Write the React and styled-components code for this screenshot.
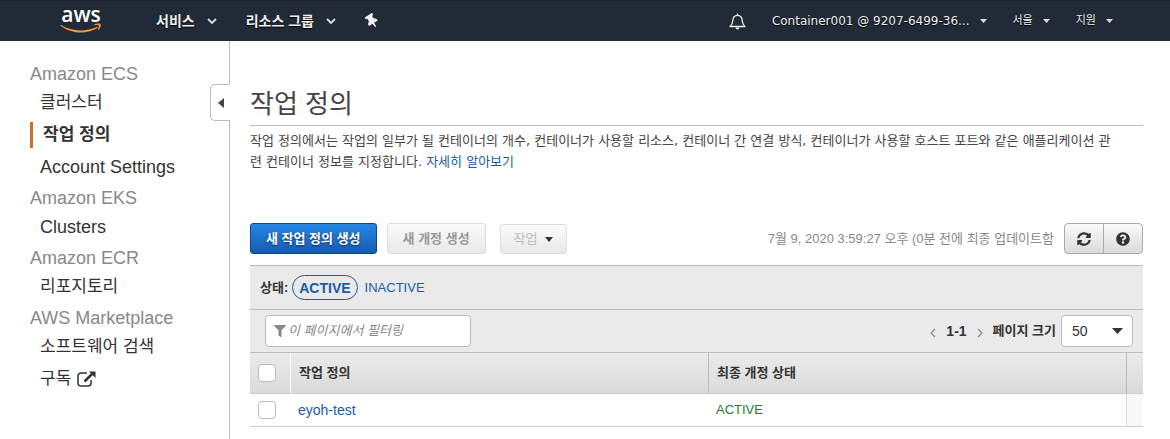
import React from "react";
import styled, { createGlobalStyle, css } from "styled-components";
import { FaFilter, FaQuestionCircle, FaSyncAlt, FaThumbtack } from "react-icons/fa";

const sans = `"Liberation Sans", "Noto Sans CJK KR", sans-serif`;
const verdana = `"DejaVu Sans", "Noto Sans CJK KR", sans-serif`;

const Global = createGlobalStyle`
  *, *::before, *::after { box-sizing: border-box; }
  body { margin: 0; background: #fff; color: #444; font: 13px/20px ${sans}; }
  button, input, select { font: inherit; color: inherit; margin: 0; }
  a { text-decoration: none; color: #1a5ba8; }
  h1, p, ul { margin: 0; padding: 0; }
  ul { list-style: none; }
`;

const Page = styled.div`
  min-height: 100vh;
  display: flex;
  flex-direction: column;
`;

const TopBar = styled.header`
  height: 41px;
  flex: none;
  display: flex;
  align-items: center;
  padding: 0 57px 0 60px;
  background: #212a37;
  border-top: 1px solid #1a222c;
`;

const Logo = styled.a`
  width: 42px;
  height: 28px;
  display: flex;
  flex-direction: column;
  align-items: center;
  gap: 2px;
  color: #fff;
  font: 600 21px/14px "Open Sans", sans-serif;
  svg { flex: none; }
`;

const NavButton = styled.button`
  display: flex;
  align-items: center;
  gap: ${(p) => (p.$small ? 10 : 12)}px;
  padding: 0;
  border: 0;
  background: none;
  color: #f0f0f0;
  font: ${(p) => (p.$small ? `12px/20px ${verdana}` : `bold 14px/20px ${sans}`)};
  text-shadow: 0 1px 1px #000;
`;

const PinIcon = styled(FaThumbtack)`
  transform: rotate(-32deg);
`;

const Menus = styled.nav`
  display: flex;
  align-items: center;
  gap: 29px;
  margin-left: 54px;
`;

const Account = styled.nav`
  display: flex;
  align-items: center;
  gap: 26px;
  margin-left: auto;
`;

const Region = styled(NavButton)`
  font-size: 11px;
`;

const Body = styled.div`
  flex: 1;
  display: flex;
`;

const Sidebar = styled.aside`
  position: relative;
  width: 230px;
  flex: none;
  padding: 20px 0 20px 30px;
  border-right: 1px solid #bbb;
`;

const Group = styled.section`
  & + & { margin-top: 2px; }
`;

const GroupTitle = styled.h2`
  margin: 0;
  font-size: 18px;
  font-weight: 400;
  line-height: 26px;
  color: #888;
`;

const SideLink = styled.a`
  display: flex;
  align-items: center;
  gap: 6px;
  height: 32px;
  padding-left: 10px;
  font-size: ${(p) => (p.$latin ? 18 : 17)}px;
  color: #333;
  ${(p) => p.$current && css`
    height: 26px;
    margin: 3px 0;
    border-left: 3px solid #c9702e;
    font-weight: bold;
  `}
`;

const Collapse = styled.button`
  position: absolute;
  top: 43px;
  right: -1px;
  width: 20px;
  height: 37px;
  display: flex;
  align-items: center;
  justify-content: center;
  padding: 0;
  background: #fff;
  border: 1px solid #bbb;
  border-right: 0;
  border-radius: 5px 0 0 5px;
`;

const Main = styled.main`
  flex: 1;
  min-width: 0;
  padding: 41px 27px 12px 20px;
`;

const Title = styled.h1`
  height: 44px;
  border-bottom: 1px solid #bbb;
  font-size: 26px;
  font-weight: 400;
  line-height: 44px;
`;

const Description = styled.p`
  padding: 4px 24px 0 0;
  font: 13px/21px ${verdana};
`;

const Toolbar = styled.div`
  display: flex;
  align-items: flex-end;
  gap: 10px;
  margin: 51px 0 11px;
`;

const Button = styled.button`
  height: 31px;
  padding: 0 15px;
  border: 1px solid ${(p) => (p.$primary ? "#0d4590" : "#ddd")};
  border-radius: 3px;
  font-weight: bold;
  color: ${(p) => (p.$primary ? "#fff" : "#999")};
  background: ${(p) => (p.$primary ? "linear-gradient(#2786e4, #165bb0)" : "linear-gradient(#fafafa, #e8e8e8)")};
  text-shadow: ${(p) => (p.$primary ? "0 1px 2px #0a3060" : "none")};
`;

const MenuButton = styled(Button)`
  height: 30px;
  margin-left: 4px;
  padding: 0 13px;
  display: flex;
  align-items: center;
  gap: 7px;
  font-weight: 400;
  color: #bbb;
`;

const Updated = styled.span`
  flex: 1;
  text-align: right;
  line-height: 31px;
  color: #888;
`;

const IconGroup = styled.div`
  display: flex;
`;

const IconButton = styled.button`
  width: 40px;
  height: 31px;
  display: grid;
  place-items: center;
  padding: 0;
  border: 1px solid #aaa;
  background: linear-gradient(#fafafa, #dadada);
  color: #333;
  font-size: 14px;
  &:first-child { border-radius: 4px 0 0 4px; }
  &:last-child { border-radius: 0 4px 4px 0; margin-left: -1px; }
`;

const PanelRow = styled.div`
  display: flex;
  align-items: center;
  height: ${(p) => p.$height}px;
  padding: 0 10px;
  border-top: 1px solid #bbb;
  background: #eaeaea;
  color: #333;
`;

const StatusButton = styled.button`
  height: 25px;
  padding: 0 6px;
  border: 1px solid ${(p) => (p.$active ? "#1a5ba8" : "transparent")};
  border-radius: 13px;
  margin-left: ${(p) => (p.$active ? 4 : 0)}px;
  background: none;
  color: #1a5ba8;
  font-weight: ${(p) => (p.$active ? "bold" : "normal")};
  font-size: ${(p) => (p.$active ? 14 : 13)}px;
`;

const Filter = styled.label`
  display: flex;
  align-items: center;
  gap: 2px;
  width: 206px;
  height: 32px;
  margin-left: 5px;
  padding: 0 8px;
  border: 1px solid #bbb;
  border-radius: 4px;
  background: #fff;
  color: #888;
  svg { flex: none; }
`;

const FilterInput = styled.input`
  flex: 1;
  min-width: 0;
  padding: 0;
  border: 0;
  outline: 0;
  background: none;
  &::placeholder { color: #888; opacity: 1; font-style: italic; }
`;

const Pager = styled.div`
  display: flex;
  align-items: center;
  gap: 10px;
  margin-left: auto;
  font-weight: bold;
`;

const Range = styled.span`
  font-size: 14px;
`;

const PagerButton = styled.button`
  display: flex;
  padding: 4px 0 0;
  border: 0;
  background: none;
`;

const SizeLabel = styled.label`
  display: flex;
  align-items: center;
  gap: 5px;
`;

const SelectBox = styled.span`
  display: grid;
  align-items: center;
  > * { grid-area: 1 / 1; }
  > svg { justify-self: end; margin-right: 10px; pointer-events: none; }
`;

const Select = styled.select`
  appearance: none;
  width: 72px;
  height: 32px;
  padding: 0 10px;
  border: 1px solid #bbb;
  border-radius: 4px;
  background: #fff;
  font-size: 14px;
  font-weight: 400;
`;

const Table = styled.table`
  width: 100%;
  table-layout: fixed;
  border-collapse: separate;
  border-spacing: 0;
  border-top: 1px solid #bbb;
`;

const HeadRow = styled.tr`
  height: 41px;
  background: linear-gradient(#ebebeb, #d9d9d9);
`;

const Head = styled.th`
  width: ${(p) => p.$width};
  padding: 0 8px;
  text-align: left;
  color: #333;
  border-bottom: 1px solid #ccc;
  border-left: ${(p) => p.$line ? `1px solid ${p.$line}` : 0};
`;

const Cell = styled.td`
  height: 33px;
  padding: 0 8px;
  color: #1b7e35;
  border-bottom: 1px solid #ccc;
  border-left: ${(p) => (p.$gutter ? "1px solid #ddd" : 0)};
  background: ${(p) => (p.$gutter ? "#f8f8f8" : "#fff")};
`;

const RowLink = styled.a`
  font-size: 14px;
`;

const Checkbox = styled.input.attrs({ type: "checkbox" })`
  appearance: none;
  display: block;
  width: 18px;
  height: 18px;
  border: 1px solid #bbb;
  border-radius: 4px;
  background: #fff;
  &:checked { background: #1a5ba8; }
`;

const Chevron = () => (
  <svg width="10" height="6" viewBox="0 0 10 6" fill="none" stroke="#ddd" strokeWidth="1.8" aria-hidden="true">
    <path d="M1 1l4 4 4-4" />
  </svg>
);

const Caret = ({ width = 8, height = 5, color = "#333" }) => (
  <svg width={width} height={height} viewBox="0 0 8 5" preserveAspectRatio="none" fill={color} aria-hidden="true">
    <path d="M0 0h8L4 5z" />
  </svg>
);

const Angle = ({ next }) => (
  <svg width="6" height="10" viewBox="0 0 6 10" fill="none" stroke="#888" strokeWidth="1.2" aria-hidden="true">
    <path d={next ? "M1 1l4 4-4 4" : "M5 1L1 5l4 4"} />
  </svg>
);

const groups = [
  { title: "Amazon ECS", items: [{ text: "클러스터" }, { text: "작업 정의", current: true }, { text: "Account Settings", latin: true }] },
  { title: "Amazon EKS", items: [{ text: "Clusters", latin: true }] },
  { title: "Amazon ECR", items: [{ text: "리포지토리" }] },
  { title: "AWS Marketplace", items: [{ text: "소프트웨어 검색" }, { text: "구독", external: true }] },
];

export default function App() {
  return (
    <Page>
      <Global />
      <TopBar>
        <Logo href="#">
          aws
          <svg width="42" height="10" viewBox="0 0 42 11" preserveAspectRatio="none" aria-hidden="true">
            <path d="M1 2.2c11 7.500 25 7.500 35.500 2.200 1-.4 1.700.5.800 1.200C27 13 11 12 .5 3c-.5-.5 0-1.100.5-.8z" fill="#f19634" />
            <path d="M34 1.800c2-1.300 5.500-1.600 6.500-.8.900 1-.2 5-2.200 6.800-.4.300-.8.100-.6-.3.600-1.500 1.500-4.200 1-4.800-.5-.6-3-.4-4.400-.2-.500 0-.7-.4-.3-.7z" fill="#f19634" />
          </svg>
        </Logo>
        <Menus>
          <NavButton>서비스 <Chevron /></NavButton>
          <NavButton>리소스 그룹 <Chevron /></NavButton>
          <NavButton aria-label="고정"><PinIcon size={14} /></NavButton>
        </Menus>
        <Account>
          <NavButton $small aria-label="알림">
            <svg width="17" height="17" viewBox="0 0 17 17" fill="none" stroke="#eee" strokeWidth="1.300" strokeLinejoin="round" aria-hidden="true">
              <path d="M1 13.500c2-1.500 2.500-2.500 2.700-5.500.2-3.500 1.800-5.700 4.800-5.700s4.600 2.200 4.800 5.700c.2 3 .7 4 2.700 5.500z" />
              <path d="M8.500.5v1.800" />
              <path d="M6.500 14.500h4c-.3 2.500-3.700 2.500-4 0z" fill="#eee" stroke="none" />
            </svg>
          </NavButton>
          <NavButton $small>Container001 @ 9207-6499-36... <Caret width={7} height={4} color="#ddd" /></NavButton>
          <Region $small>서울 <Caret width={7} height={4} color="#ddd" /></Region>
          <Region $small>지원 <Caret width={7} height={4} color="#ddd" /></Region>
        </Account>
      </TopBar>
      <Body>
        <Sidebar>
          {groups.map((g) => (
            <Group key={g.title}>
              <GroupTitle>{g.title}</GroupTitle>
              <ul>
                {g.items.map((i) => (
                  <li key={i.text}>
                    <SideLink href="#" $latin={i.latin} $current={i.current}>
                      {i.text}
                      {i.external && (
                        <svg width="19" height="16" viewBox="0 0 19 16" fill="none" stroke="#333" aria-hidden="true">
                          <path d="M10 2H4a3 3 0 0 0-3 3v7a3 3 0 0 0 3 3h7a3 3 0 0 0 3-3V9" strokeWidth="1.500" />
                          <path d="M7.500 10.500L15 3" strokeWidth="2.500" />
                          <path d="M12 0.500h6.500V7z" fill="#333" stroke="none" />
                        </svg>
                      )}
                    </SideLink>
                  </li>
                ))}
              </ul>
            </Group>
          ))}
          <Collapse aria-label="메뉴 접기">
            <svg width="6" height="10" viewBox="0 0 6 10" fill="#444" aria-hidden="true"><path d="M6 0v10L0 5z" /></svg>
          </Collapse>
        </Sidebar>
        <Main>
          <Title>작업 정의</Title>
          <Description>
            작업 정의에서는 작업의 일부가 될 컨테이너의 개수, 컨테이너가 사용할 리소스, 컨테이너 간 연결 방식, 컨테이너가 사용할 호스트 포트와 같은 애플리케이션 관련 컨테이너 정보를 지정합니다. <a href="#">자세히 알아보기</a>
          </Description>
          <Toolbar>
            <Button $primary>새 작업 정의 생성</Button>
            <Button>새 개정 생성</Button>
            <MenuButton>작업 <Caret /></MenuButton>
            <Updated>7월 9, 2020 3:59:27 오후 (0분 전에 최종 업데이트함</Updated>
            <IconGroup>
              <IconButton aria-label="새로 고침"><FaSyncAlt /></IconButton>
              <IconButton aria-label="도움말"><FaQuestionCircle /></IconButton>
            </IconGroup>
          </Toolbar>
          <PanelRow $height={44}>
            <b>상태:</b>
            <StatusButton $active>ACTIVE</StatusButton>
            <StatusButton>INACTIVE</StatusButton>
          </PanelRow>
          <PanelRow $height={43}>
            <Filter>
              <FaFilter size={12} />
              <FilterInput aria-label="필터" placeholder="이 페이지에서 필터링" />
            </Filter>
            <Pager>
              <PagerButton aria-label="이전"><Angle /></PagerButton>
              <Range>1-1</Range>
              <PagerButton aria-label="다음"><Angle next /></PagerButton>
              <SizeLabel>
                페이지 크기
                <SelectBox>
                  <Select defaultValue="50"><option>50</option><option>100</option></Select>
                  <Caret width={11} height={6} />
                </SelectBox>
              </SizeLabel>
            </Pager>
          </PanelRow>
          <Table>
            <thead>
              <HeadRow>
                <Head $width="40px"><Checkbox aria-label="모두 선택" /></Head>
                <Head $line="#fff">작업 정의</Head>
                <Head $line="#bbb">최종 개정 상태</Head>
                <Head $width="15px" $line="#bbb" />
              </HeadRow>
            </thead>
            <tbody>
              <tr>
                <Cell><Checkbox aria-label="eyoh-test" /></Cell>
                <Cell><RowLink href="#">eyoh-test</RowLink></Cell>
                <Cell>ACTIVE</Cell>
                <Cell $gutter />
              </tr>
            </tbody>
          </Table>
        </Main>
      </Body>
    </Page>
  );
}
